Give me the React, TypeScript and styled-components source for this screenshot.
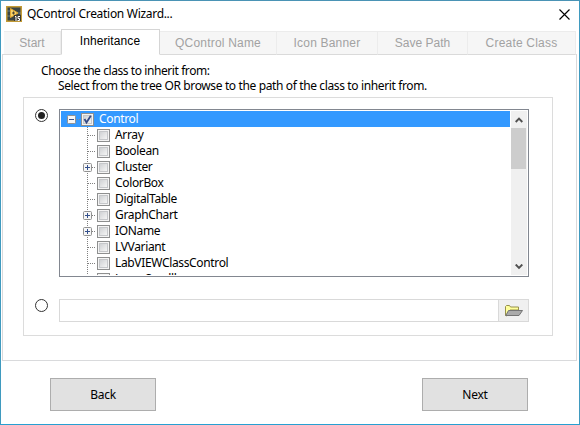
import React from "react";
import styled, { createGlobalStyle, css } from "styled-components";

const GlobalStyle = createGlobalStyle`
  *, *::before, *::after { box-sizing: border-box; }
  body { margin: 0; background: #fff; }
  button, input { font: inherit; border-radius: 0; margin: 0; }
`;

const Window = styled.div`
  width: 580px;
  height: 425px;
  display: flex;
  flex-direction: column;
  background: #fff;
  border: 1px solid #3f9abf;
  border-top-color: #4a93b5;
  border-bottom-color: #27a0d2;
  color: #000;
  font: 12px/16px "Noto Sans", "Open Sans", sans-serif;
  overflow: hidden;
`;

const Fitted = styled.span<{ $spacing?: number }>`
  white-space: pre;
  letter-spacing: ${(p) => p.$spacing ?? 0}px;
`;

const TitleBar = styled.header`
  height: 28px;
  flex: none;
  display: flex;
  align-items: center;
  padding: 0 9px 2px 5px;
`;

const Title = styled.h1`
  flex: 1;
  margin: 0 0 0 5px;
  font-size: 12px;
  font-weight: 400;
  line-height: 16px;
`;

const CloseButton = styled.button`
  display: flex;
  padding: 0;
  border: 0;
  background: none;
`;

const TabStrip = styled.nav`
  display: flex;
  align-items: flex-end;
  height: 26px;
  flex: none;
  padding-left: 3px;
  position: relative;
  z-index: 1;
`;

const Tab = styled.button<{ $width: number; $active?: boolean }>`
  width: ${(p) => p.$width}px;
  height: 24px;
  padding: 0 0 1px;
  border: 1px solid #ececec;
  border-left: 0;
  border-bottom-color: #dadada;
  background: #f6f6f6;
  color: #a2a2a2;
  font: 12px/14px "Liberation Sans", Arial, sans-serif;
  white-space: nowrap;
  ${(p) =>
    p.$active &&
    css`
      height: 26px;
      padding: 0 1px 3px 0;
      border: 1px solid #d5d5d5;
      border-bottom-color: #fff;
      background: #fff;
      color: #000;
    `}
`;

const Panel = styled.main`
  width: 575px;
  height: 307px;
  flex: none;
  margin: -1px 0 0 1px;
  padding: 8px 22px 0 20px;
  border: 1px solid #d9dadc;
`;

const Heading = styled.p`
  height: 15px;
  margin: 0 0 0 18px;
  line-height: 15px;
`;

const Hint = styled(Heading)`
  margin-left: 35px;
`;

const Group = styled.section`
  width: 530px;
  height: 239px;
  margin-top: 4px;
  padding: 11px 0 0 11px;
  border: 1px solid #dcdcdc;
`;

const Choice = styled.div<{ $gap?: number }>`
  display: flex;
  align-items: flex-start;
  margin-top: ${(p) => p.$gap ?? 0}px;
`;

const Radio = styled.button<{ $checked?: boolean }>`
  width: 13px;
  height: 13px;
  flex: none;
  display: grid;
  place-items: center;
  margin: 0 11px 0 0;
  padding: 0;
  border: 1px solid #333;
  border-radius: 50%;
  background: #fff;
  &::after {
    content: "";
    width: 7px;
    height: 7px;
    border-radius: 50%;
    background: ${(p) => (p.$checked ? "#222" : "transparent")};
  }
`;

const TreeBox = styled.div`
  display: flex;
  width: 470px;
  height: 168px;
  padding: 1px;
  border: 1px solid #828790;
`;

const TreeList = styled.div`
  width: 449px;
  height: 164px;
  overflow: hidden;
`;

const RootRow = styled.div`
  display: flex;
  align-items: center;
  height: 16px;
  padding-left: 6px;
  background: #39f;
  color: #fff;
`;

const Row = styled.div`
  display: flex;
  align-items: center;
  height: 16px;
  padding-left: 22px;
`;

const Label = styled.span`
  margin-left: 5px;
  line-height: 16px;
  white-space: pre;
  letter-spacing: -0.35px;
`;

const ScrollBar = styled.div`
  width: 16px;
  height: 164px;
  margin-left: 1px;
  display: flex;
  flex-direction: column;
  background: #f0f0f0;
`;

const ScrollArrow = styled.div`
  height: 17px;
  flex: none;
  display: grid;
  place-items: center;
`;

const Thumb = styled.div`
  width: 15px;
  height: 41px;
  background: #cdcdcd;
  margin-bottom: auto;
`;

const PathInput = styled.input`
  width: 440px;
  height: 23px;
  padding: 0 4px;
  border: 1px solid #d9d9d9;
  background: #fff;
  outline: 0;
`;

const BrowseButton = styled.button`
  width: 30px;
  height: 23px;
  display: grid;
  place-items: center;
  padding: 0;
  border: 1px solid #d9d9d9;
  border-left: 0;
  background: #f0f0f0;
`;

const Footer = styled.footer`
  display: flex;
  justify-content: space-between;
  padding: 17px 51px 0 49px;
`;

const PushButton = styled.button`
  width: 106px;
  height: 33px;
  padding: 1px 0 0;
  border: 1px solid #adadad;
  background: #e1e1e1;
  color: #000;
`;

const AppIcon = () => (
  <svg width="16" height="16" viewBox="0 0 16 16">
    <rect width="16" height="16" fill="#3a4544" />
    <path d="M0 5h5M0 10h5M11 7h5" stroke="#6b8288" />
    <rect x=".75" y=".75" width="14.5" height="14.5" fill="none" stroke="#c29a35" strokeWidth="1.5" />
    <path d="M4.5 2.5v9L12 7z" fill="#f6d36a" stroke="#e0a52c" />
    <path d="M6 7h3M7.5 5.5v3" stroke="#4d4430" />
    <rect x="8" y="9" width="7" height="6" fill="#3b3a33" />
    <path d="M9 10.5h1V15M14 10.5h-2v2h1.5v2H11.5" fill="none" stroke="#fff" />
  </svg>
);

const CloseIcon = () => (
  <svg width="11" height="11" viewBox="0 0 11 11">
    <path d="M.5.5l10 10M10.5.5l-10 10" stroke="#000" strokeWidth="1.15" />
  </svg>
);

const Expander = ({ kind }: { kind: "plus" | "minus" | "none" }) => (
  <svg width="14" height="16" viewBox="0 0 14 16">
    {kind !== "minus" && (
      <>
        <path d="M4.5 0v16" stroke="#808080" strokeDasharray="1 1" />
        <path d="M5 8.5h8" stroke="#808080" strokeDasharray="1 1" />
      </>
    )}
    {kind === "minus" && <path d="M10 8.5h4" stroke="#7488a0" strokeDasharray="1 1" />}
    {kind !== "none" && (
      <>
        <rect x="0.5" y="4.5" width="8" height="8" rx="1" fill="#f6f6f6" stroke="#919191" />
        <path d={kind === "minus" ? "M2 8.5h5" : "M2 8.5h5M4.5 6v5"} stroke="#34508c" />
      </>
    )}
  </svg>
);

const CheckBox = ({ checked }: { checked?: boolean }) => (
  <svg width="13" height="13" viewBox="0 0 13 13">
    <defs>
      <linearGradient id="face" x1="0" y1="0" x2="1" y2="1">
        <stop offset="0" stopColor="#cdcfd2" />
        <stop offset="1" stopColor="#f7f7f7" />
      </linearGradient>
    </defs>
    <rect x=".5" y=".5" width="12" height="12" fill="#f4f4f4" stroke="#8e8f8f" />
    <rect x="2.5" y="2.5" width="8" height="8" fill="url(#face)" stroke="#c5c7ca" />
    {checked && <path d="M3.5 6l2 3.5L9.8 2.8" fill="none" stroke="#354a85" strokeWidth="1.8" />}
  </svg>
);

const Chevron = ({ down }: { down?: boolean }) => (
  <svg width="8" height="6" viewBox="0 0 8 6">
    <path d={down ? "M.7 .5L4 3.8 7.3 .5" : "M.7 5L4 1.7 7.3 5"} fill="none" stroke="#505050" strokeWidth="1.9" />
  </svg>
);

const FolderIcon = () => (
  <svg width="18" height="13" viewBox="0 0 18 13">
    <path d="M.5 11.5v-9l1-1h3l1 1.5h8v3H5l-3.5 6z" fill="#ffff9c" stroke="#96904a" />
    <path d="M3.5 6.5h14l-3.5 5H.8z" fill="#aaa" stroke="#747474" />
  </svg>
);

const tabs = [
  { name: "Start", width: 57, spacing: 0 },
  { name: "Inheritance", width: 99, spacing: 0.1, active: true },
  { name: "QControl Name", width: 117, spacing: 0.2 },
  { name: "Icon Banner", width: 101, spacing: 0.2 },
  { name: "Save Path", width: 90, spacing: 0 },
  { name: "Create Class", width: 108, spacing: 0.2 },
];

const classes: { name: string; group?: boolean }[] = [
  { name: "Array" },
  { name: "Boolean" },
  { name: "Cluster", group: true },
  { name: "ColorBox" },
  { name: "DigitalTable" },
  { name: "GraphChart", group: true },
  { name: "IOName", group: true },
  { name: "LVVariant" },
  { name: "LabVIEWClassControl" },
  { name: "LargeScrollbar" },
];

export default function App() {
  return (
    <>
      <GlobalStyle />
      <Window>
        <TitleBar>
          <AppIcon />
          <Title>
            <Fitted $spacing={-0.3}>QControl Creation Wizard...</Fitted>
          </Title>
          <CloseButton aria-label="Close">
            <CloseIcon />
          </CloseButton>
        </TitleBar>
        <TabStrip>
          {tabs.map((t) => (
            <Tab key={t.name} $width={t.width} $active={t.active}>
              <Fitted $spacing={t.spacing}>{t.name}</Fitted>
            </Tab>
          ))}
        </TabStrip>
        <Panel>
          <Heading>
            <Fitted $spacing={-0.42}>Choose the class to inherit from:</Fitted>
          </Heading>
          <Hint>
            <Fitted $spacing={-0.37}>Select from the tree OR browse to the path of the class to inherit from.</Fitted>
          </Hint>
          <Group>
            <Choice>
              <Radio $checked aria-label="Select from tree" />
              <TreeBox>
                <TreeList>
                  <RootRow>
                    <Expander kind="minus" />
                    <CheckBox checked />
                    <Label>Control</Label>
                  </RootRow>
                  {classes.map((c) => (
                    <Row key={c.name}>
                      <Expander kind={c.group ? "plus" : "none"} />
                      <CheckBox />
                      <Label>{c.name}</Label>
                    </Row>
                  ))}
                </TreeList>
                <ScrollBar>
                  <ScrollArrow>
                    <Chevron />
                  </ScrollArrow>
                  <Thumb />
                  <ScrollArrow>
                    <Chevron down />
                  </ScrollArrow>
                </ScrollBar>
              </TreeBox>
            </Choice>
            <Choice $gap={22}>
              <Radio aria-label="Browse to path" />
              <PathInput aria-label="Class path" />
              <BrowseButton aria-label="Browse">
                <FolderIcon />
              </BrowseButton>
            </Choice>
          </Group>
        </Panel>
        <Footer>
          <PushButton>
            <Fitted $spacing={-0.25}>Back</Fitted>
          </PushButton>
          <PushButton>
            <Fitted $spacing={-0.25}>Next</Fitted>
          </PushButton>
        </Footer>
      </Window>
    </>
  );
}
